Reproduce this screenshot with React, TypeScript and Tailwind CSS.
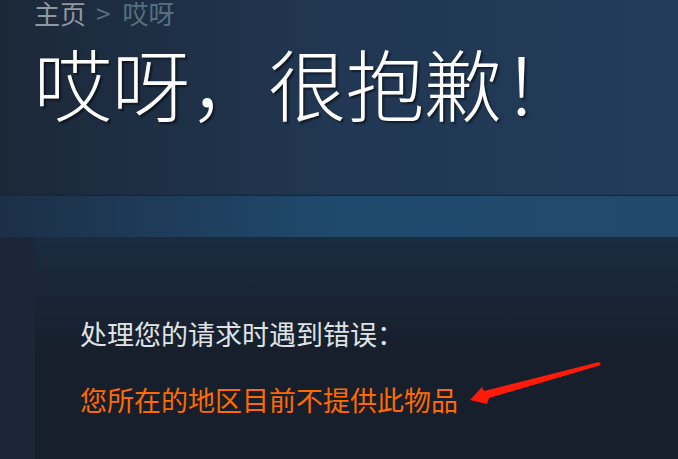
export default function App() {
  return (
    <div
      className="relative w-[678px] h-[459px] overflow-hidden bg-[#1b2638]"
      style={{ fontFamily: "'Noto Sans CJK SC', 'Noto Sans', sans-serif" }}
    >
      <div className="h-[195px] bg-gradient-to-r from-[#1b2838] via-[#213753] to-[#233c59] px-[34px]">
        <div className="flex items-center text-[26px] leading-[26px] text-[#8f98a0]">
          <span>主页</span>
          <span className="ml-[10px] mr-[12px] text-[#56707f]">&gt;</span>
          <span className="text-[#56707f]">哎呀</span>
        </div>
        <h1 className="mt-[17px] text-[78px] leading-[78px] font-light text-white [text-shadow:2px_2px_2px_rgba(0,0,0,0.5)]">
          哎呀，很抱歉！
        </h1>
      </div>
      <div className="h-[1px] bg-[#17263a] shadow-[0_1px_3px_rgba(0,0,0,0.4)]" />
      <div className="h-[41px] bg-gradient-to-r from-[#1c2f48] via-[#1f4a6d] to-[#21496b]" />
      <div className="ml-[35px] h-[230px] bg-gradient-to-b from-[#1a2b40] via-[#171f2c] to-[#171f2c] px-[45px] pt-[77px]">
        <p className="text-[27px] leading-[40px] text-[#dfe3e6]">处理您的请求时遇到错误：</p>
        <p className="mt-[26px] text-[27px] leading-[40px] text-[#ff6a00]">您所在的地区目前不提供此物品</p>
      </div>
      <svg className="absolute left-0 top-0" width="678" height="459" viewBox="0 0 678 459">
        <polygon
          points="599,362 601,365 489,398 487,404 470,400 482,387 484,391"
          fill="#ff1a0a"
        />
      </svg>
    </div>
  )
}
